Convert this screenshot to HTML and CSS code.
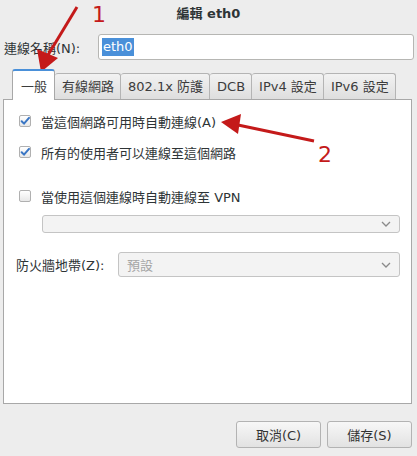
FILE: index.html
```html
<!DOCTYPE html>
<html>
<head>
<meta charset="utf-8">
<link rel="stylesheet" href="styles.css">
</head>
<body>
<div class="window">
  <div class="title">編輯 eth0</div>
  <div class="name-row">
    <span class="label">連線名稱(N):</span>
    <div class="entry"><span class="sel">eth0</span></div>
  </div>
  <div class="tabs">
    <div class="tab active">一般</div>
    <div class="tab">有線網路</div>
    <div class="tab">802.1x 防護</div>
    <div class="tab">DCB</div>
    <div class="tab">IPv4 設定</div>
    <div class="tab">IPv6 設定</div>
  </div>
  <div class="panel">
    <div class="check-row first">
      <span class="cb checked"><svg width="12" height="12" viewBox="0 0 12 12"><path d="M2 6.3 L4.8 9.2 L10.8 2.3" fill="none" stroke="#3a76c4" stroke-width="2.4" stroke-linecap="round" stroke-linejoin="round"/></svg></span>
      <span>當這個網路可用時自動連線(A)</span>
    </div>
    <div class="check-row">
      <span class="cb checked"><svg width="12" height="12" viewBox="0 0 12 12"><path d="M2 6.3 L4.8 9.2 L10.8 2.3" fill="none" stroke="#3a76c4" stroke-width="2.4" stroke-linecap="round" stroke-linejoin="round"/></svg></span>
      <span>所有的使用者可以連線至這個網路</span>
    </div>
    <div class="check-row vpn">
      <span class="cb"></span>
      <span>當使用這個連線時自動連線至 VPN</span>
    </div>
    <div class="combo vpn-combo">
      <span></span>
      <svg class="chev" width="10" height="6" viewBox="0 0 10 6"><path d="M1 1 L5 5 L9 1" fill="none" stroke="#8a8a8a" stroke-width="1.3"/></svg>
    </div>
    <div class="zone-row">
      <span class="zone-label">防火牆地帶(Z):</span>
      <div class="combo zone-combo">
        <span class="placeholder">預設</span>
        <svg class="chev" width="10" height="6" viewBox="0 0 10 6"><path d="M1 1 L5 5 L9 1" fill="none" stroke="#8a8a8a" stroke-width="1.3"/></svg>
      </div>
    </div>
  </div>
  <div class="buttons">
    <div class="btn">取消(C)</div>
    <div class="btn">儲存(S)</div>
  </div>
  <svg class="annot" width="417" height="456" viewBox="0 0 417 456">
    <line x1="77" y1="7" x2="48" y2="55" stroke="#c41a1a" stroke-width="3"/>
    <polygon points="41,72 37,49 58,58" fill="#c41a1a"/>
    <text x="92" y="22" fill="#c41a1a" font-family="DejaVu Sans, sans-serif" font-size="22">1</text>
    <line x1="314" y1="141" x2="238" y2="125" stroke="#c41a1a" stroke-width="3"/>
    <polygon points="221,122 241,114 238,134" fill="#c41a1a"/>
    <text x="318" y="162" fill="#c41a1a" font-family="DejaVu Sans, sans-serif" font-size="22">2</text>
  </svg>
</div>
</body>
</html>
```
FILE: styles.css
```css
html, body {
  margin: 0;
  padding: 0;
}
body {
  background: #ededed;
  font-family: "DejaVu Sans", "Noto Sans CJK TC", sans-serif;
  font-size: 13px;
  color: #2e3436;
}
.window {
  position: relative;
  width: 417px;
  height: 456px;
  overflow: hidden;
}
.title {
  height: 28px;
  line-height: 28px;
  text-align: center;
  font-weight: bold;
  color: #2e3436;
}
.name-row {
  display: flex;
  align-items: center;
  height: 28px;
  margin-top: 5px;
  padding: 0 3px 0 4px;
}
.label {
  width: 94px;
}
.entry {
  flex: 1;
  height: 24px;
  background: #fff;
  border: 1px solid #b6b6b3;
  border-radius: 3px;
  display: flex;
  align-items: center;
  padding-left: 3px;
}
.sel {
  background: #4a90d9;
  color: #fff;
  line-height: 18px;
  padding: 0 1px;
}
.tabs {
  display: flex;
  align-items: flex-end;
  margin-top: 9px;
  padding-left: 12px;
  height: 29px;
}
.tab {
  height: 25px;
  line-height: 25px;
  padding: 0 6px 0 7px;
  border: 1px solid #b4b4b4;
  border-bottom: none;
  border-left: none;
  border-radius: 3px 3px 0 0;
  background: linear-gradient(#f2f2f2, #dedede);
  color: #3c3c3c;
}
.tab.active {
  height: 29px;
  line-height: 31px;
  background: #fff;
  border: 1px solid #a8a8a8;
  border-top: 2px solid #4a90d9;
  border-bottom: none;
  padding: 0 7px 0 8px;
  position: relative;
  z-index: 1;
  margin-bottom: -1px;
}
.panel {
  margin: 0 5px 0 3px;
  height: 305px;
  background: #fff;
  border: 1px solid #a8a8a8;
  box-sizing: border-box;
  padding: 0 0 0 12px;
}
.check-row {
  display: flex;
  align-items: center;
  height: 20px;
  gap: 10px;
  padding-left: 3px;
}
.check-row.first {
  margin-top: 11px;
}
.check-row + .check-row {
  margin-top: 11px;
}
.check-row.vpn {
  margin-top: 24px;
}
.cb {
  width: 12px;
  height: 12px;
  box-sizing: border-box;
  border: 1px solid #b0b0b0;
  border-radius: 2px;
  background: linear-gradient(#ffffff, #e8e8e8);
  display: flex;
  align-items: center;
  justify-content: center;
}
.cb svg {
  display: block;
}
.combo {
  display: flex;
  align-items: center;
  justify-content: space-between;
  background: #f3f3f3;
  border: 1px solid #c4c4c4;
  border-radius: 3px;
  box-sizing: border-box;
  padding: 0 8px 0 8px;
  color: #a0a0a0;
}
.vpn-combo {
  margin: 9px 11px 0 26px;
  height: 18px;
}
.zone-row {
  display: flex;
  align-items: center;
  margin-top: 19px;
  padding-right: 11px;
}
.zone-label {
  width: 102px;
}
.zone-combo {
  flex: 1;
  height: 25px;
}
.placeholder {
  color: #a6a6a6;
}
.buttons {
  display: flex;
  justify-content: flex-end;
  gap: 6px;
  padding: 17px 5px 0 0;
}
.btn {
  width: 85px;
  height: 27px;
  box-sizing: border-box;
  border: 1px solid #b3b3b3;
  border-radius: 3px;
  background: linear-gradient(#f7f7f7, #e2e2e2);
  display: flex;
  align-items: center;
  justify-content: center;
  color: #333;
}
.annot {
  position: absolute;
  left: 0;
  top: 0;
  pointer-events: none;
}
```
